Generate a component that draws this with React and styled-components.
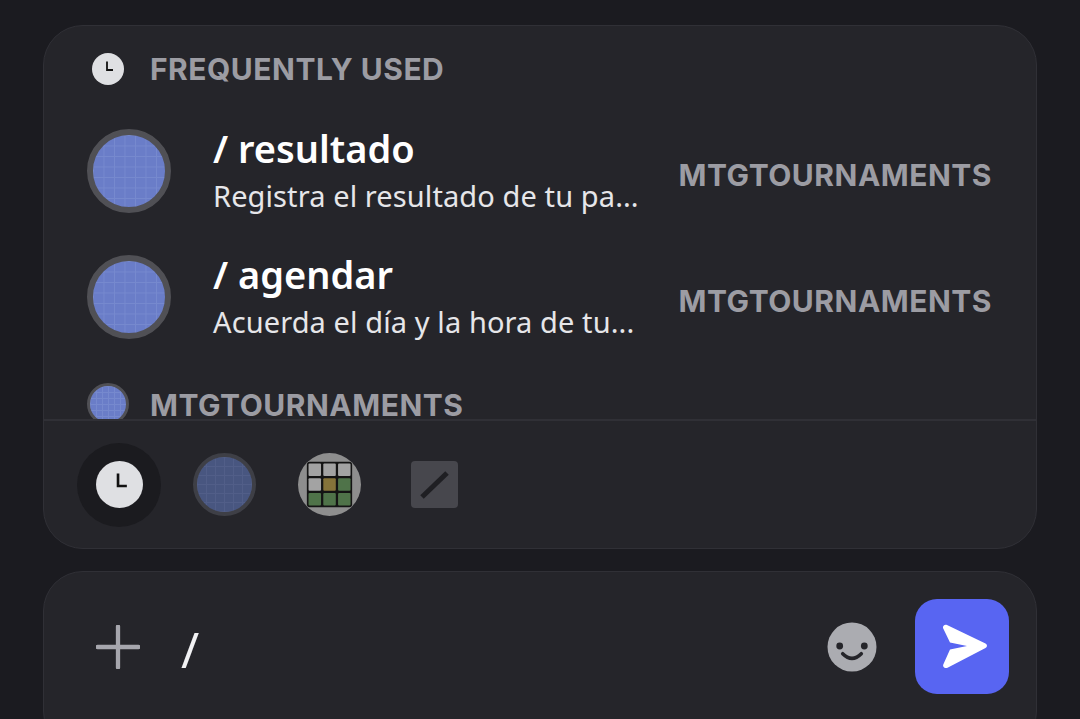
import React from "react";
import styled, { createGlobalStyle } from "styled-components";

const GlobalStyle = createGlobalStyle`
  html, body {
    margin: 0;
    height: 100%;
    background: #1b1b20;
    overflow: hidden;
  }
  body {
    font-family: "Noto Sans", "Open Sans", sans-serif;
  }
`;

const Screen = styled.div`
  width: 1080px;
  height: 719px;
  padding: 25px 43px 0;
  box-sizing: border-box;
  overflow: hidden;
  display: flex;
  flex-direction: column;
  gap: 22px;
`;

const Panel = styled.section`
  height: 524px;
  flex: none;
  box-sizing: border-box;
  background: #25252a;
  border: 1.5px solid #303036;
  border-radius: 40px;
  display: flex;
  flex-direction: column;
  overflow: hidden;
`;

const List = styled.div`
  height: 393px;
  flex: none;
  overflow: hidden;
  padding-left: 43px;
  padding-right: 44px;
  box-sizing: border-box;
`;

const Heading = styled.div`
  display: flex;
  align-items: center;
  height: 42px;
  margin-top: ${({ $top }) => $top}px;
  color: #9c9ca3;
  font-family: Inter, "Noto Sans", sans-serif;
  font-size: 30px;
  font-weight: 700;
  letter-spacing: 0.5px;
  line-height: 28px;
  white-space: nowrap;
`;

const HeadingIcon = styled.div`
  width: 58px;
  flex: none;
  margin-left: 5px;
  display: flex;
`;

const HeadingLabel = styled.span`
  margin-left: 21px;
  padding-top: 2px;
`;

const Rows = styled.div`
  margin-top: 18px;
`;

const Row = styled.div`
  display: flex;
  align-items: center;
  height: 126px;
`;

const BotAvatar = styled.div`
  box-sizing: border-box;
  flex: none;
  width: ${({ $size }) => $size}px;
  height: ${({ $size }) => $size}px;
  border-radius: 50%;
  border: ${({ $ring }) => $ring}px solid ${({ $dim }) => ($dim ? "#3e3f46" : "#505055")};
  background-color: ${({ $dim }) => ($dim ? "#485680" : "#6a7dc8")};
  background-image:
    linear-gradient(${({ $dim }) => ($dim ? "#515e88" : "#7689ce")} 1px, transparent 1px),
    linear-gradient(90deg, ${({ $dim }) => ($dim ? "#515e88" : "#7689ce")} 1px, transparent 1px);
  background-size: ${({ $cell }) => $cell}px ${({ $cell }) => $cell}px;
`;

const RowText = styled.div`
  margin-left: 42px;
  width: 464px;
  flex: none;
  min-width: 0;
  display: flex;
  flex-direction: column;
  gap: 6px;
  padding-bottom: 3px;
`;

const Command = styled.div`
  color: #fff;
  font-size: 38px;
  font-weight: 600;
  line-height: 46px;
`;

const Description = styled.div`
  color: #e6e6e9;
  font-size: 29px;
  letter-spacing: 0.1px;
  line-height: 38px;
  white-space: nowrap;
`;

const Source = styled.div`
  margin-left: auto;
  padding-top: 8px;
  color: #9c9ca3;
  font-family: Inter, "Noto Sans", sans-serif;
  font-size: 30px;
  font-weight: 700;
  letter-spacing: 0.5px;
  white-space: nowrap;
`;

const Tabs = styled.div`
  flex: 1;
  border-top: 2px solid #303036;
  display: flex;
  align-items: center;
  gap: 21px;
  padding-left: 33px;
`;

const Tab = styled.div`
  width: 84px;
  height: 84px;
  flex: none;
  border-radius: 50%;
  display: flex;
  align-items: center;
  justify-content: center;
  background: ${({ $active }) => ($active ? "#1b1b1f" : "transparent")};
`;

const Composer = styled.div`
  height: 180px;
  flex: none;
  box-sizing: border-box;
  background: #25252a;
  border: 1.5px solid #303036;
  border-radius: 40px;
  display: flex;
  align-items: flex-start;
  padding: 27px 27px 0 52px;
`;

const ComposerIcon = styled.div`
  display: flex;
  flex: none;
  height: 95px;
  align-items: center;
`;

const Input = styled.div`
  flex: 1;
  margin-left: 41px;
  height: 95px;
  padding-top: 6px;
  box-sizing: border-box;
  display: flex;
  align-items: center;
  color: #f2f2f4;
  font-size: 49px;
  font-weight: 400;
  line-height: 1;
`;

const SendButton = styled.button`
  width: 94px;
  height: 95px;
  flex: none;
  margin-left: 38px;
  padding: 0 0 0 5px;
  border: none;
  border-radius: 22px;
  background: #5865f2;
  display: flex;
  align-items: center;
  justify-content: center;
`;

const Clock = ({ size }) => (
  <svg width={size} height={size} viewBox="0 0 32 32">
    <circle cx="16" cy="16" r="16" fill="#dfe0e3" />
    <path d="M15 8.500V17H21" fill="none" stroke="#111" strokeWidth="1.800" />
  </svg>
);

const WordleIcon = () => {
  const cells = ["#a3a3a3", "#a3a3a3", "#a3a3a3", "#a3a3a3", "#85733a", "#4f7349", "#4f7349", "#4f7349", "#4f7349"];
  return (
    <svg width="63" height="63" viewBox="0 0 64 64">
      <circle cx="32" cy="32" r="32" fill="#8e8e8e" />
      <rect x="9" y="9" width="46" height="46" rx="3" fill="#141414" />
      {cells.map((fill, i) => (
        <rect
          key={i}
          x={10.7 + (i % 3) * 15}
          y={10.7 + Math.floor(i / 3) * 15}
          width="12.700"
          height="12.700"
          rx="1"
          fill={fill}
        />
      ))}
    </svg>
  );
};

const SlashIcon = () => (
  <svg width="47" height="47" viewBox="0 0 47 47">
    <rect width="47" height="47" rx="4" fill="#47474d" />
    <path d="M11 36L36 12" stroke="#1f1f23" strokeWidth="5" />
  </svg>
);

const PlusIcon = () => (
  <svg width="44" height="44" viewBox="0 0 44 44">
    <path d="M22 1.500V42.500M1.500 22H42.500" stroke="#a6a6ad" strokeWidth="4.300" strokeLinecap="round" />
  </svg>
);

const SmileIcon = () => (
  <svg width="50" height="50" viewBox="0 0 50 50">
    <circle cx="25" cy="25" r="24.500" fill="#abacb1" />
    <circle cx="12.700" cy="24" r="3.400" fill="#25252a" />
    <circle cx="37.300" cy="24" r="3.400" fill="#25252a" />
    <path d="M15.700 31.700Q25 41 34.300 31.700" fill="none" stroke="#25252a" strokeWidth="3.600" strokeLinecap="round" />
  </svg>
);

const SendIcon = () => (
  <svg width="46" height="46" viewBox="0 0 46 46">
    <path
      d="M1 4C0.500 1.500 3 0 5 1L43.500 19.500C45.500 20.500 45.500 23 43.500 24L6 43.500C3 45 0 43 1.500 40L8 25.500L25 22L8 18.500Z"
      fill="#fff"
    />
  </svg>
);

const commands = [
  { name: "/ resultado", description: "Registra el resultado de tu pa..." },
  { name: "/ agendar", description: "Acuerda el día y la hora de tu..." },
];

const App = () => (
  <>
    <GlobalStyle />
    <Screen>
      <Panel>
        <List>
          <Heading $top={22}>
            <HeadingIcon>
              <Clock size={32} />
            </HeadingIcon>
            FREQUENTLY USED
          </Heading>
          <Rows>
            {commands.map((command) => (
              <Row key={command.name}>
                <BotAvatar $size={84} $ring={6} $cell={10.5} />
                <RowText>
                  <Command>{command.name}</Command>
                  <Description>{command.description}</Description>
                </RowText>
                <Source>MTGTOURNAMENTS</Source>
              </Row>
            ))}
          </Rows>
          <Heading $top={23}>
            <BotAvatar $size={42} $ring={3} $cell={6} />
            <HeadingLabel>MTGTOURNAMENTS</HeadingLabel>
          </Heading>
        </List>
        <Tabs>
          <Tab $active>
            <Clock size={47} />
          </Tab>
          <Tab>
            <BotAvatar $size={63} $ring={4} $cell={9} $dim />
          </Tab>
          <Tab>
            <WordleIcon />
          </Tab>
          <Tab>
            <SlashIcon />
          </Tab>
        </Tabs>
      </Panel>
      <Composer>
        <ComposerIcon>
          <PlusIcon />
        </ComposerIcon>
        <Input>/</Input>
        <ComposerIcon>
          <SmileIcon />
        </ComposerIcon>
        <SendButton aria-label="send">
          <SendIcon />
        </SendButton>
      </Composer>
    </Screen>
  </>
);

export default App;
